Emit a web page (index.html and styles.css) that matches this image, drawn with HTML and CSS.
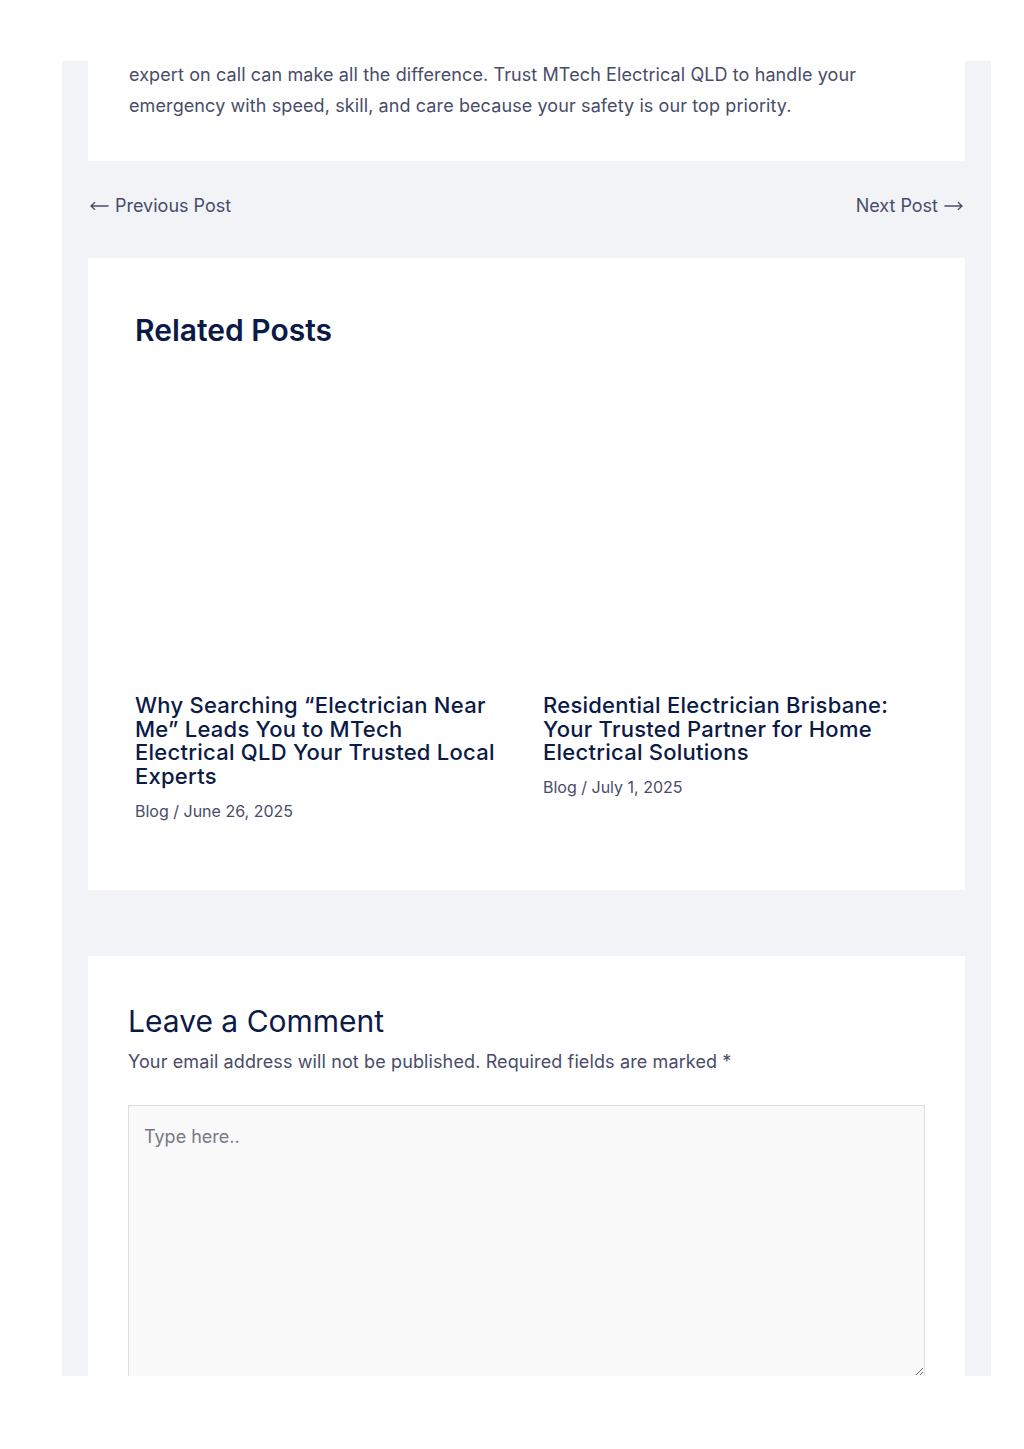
FILE: index.html
```html
<!DOCTYPE html>
<html lang="en">
<head>
    <meta charset="UTF-8">
    <title>Emergency Electrician - MTech Electrical QLD</title>
    <link rel="stylesheet" href="styles.css">
</head>
<body>
    <div class="site">
        <article class="entry">
            <p>expert on call can make all the difference. Trust MTech Electrical QLD to handle your emergency with speed, skill, and care because your safety is our top priority.</p>
        </article>

        <nav class="post-nav">
            <a href="#">
                <svg class="arrow" width="19" height="10" viewBox="0 0 19 10" aria-hidden="true"><path d="M18.5 5H1M5 1.2L1 5l4 3.8"/></svg>
                Previous Post
            </a>
            <a href="#">
                Next Post
                <svg class="arrow" width="19" height="10" viewBox="0 0 19 10" aria-hidden="true"><path d="M0.5 5H18M14 1.2L18 5l-4 3.8"/></svg>
            </a>
        </nav>

        <section class="related">
            <h2>Related Posts</h2>
            <div class="related-grid">
                <div class="related-item">
                    <div class="thumb"></div>
                    <h3><a href="#">Why Searching &ldquo;Electrician Near Me&rdquo; Leads You to MTech Electrical QLD Your Trusted Local Experts</a></h3>
                    <div class="meta">Blog / June 26, 2025</div>
                </div>
                <div class="related-item">
                    <div class="thumb"></div>
                    <h3><a href="#">Residential Electrician Brisbane: Your Trusted Partner for Home Electrical Solutions</a></h3>
                    <div class="meta">Blog / July 1, 2025</div>
                </div>
            </div>
        </section>

        <section class="comments">
            <h3>Leave a Comment</h3>
            <p class="note">Your email address will not be published. Required fields are marked <span>*</span></p>
            <form>
                <textarea placeholder="Type here.."></textarea>
            </form>
        </section>
    </div>
</body>
</html>
```

FILE: styles.css
```css
body {
    margin: 0;
    background: #ffffff;
    font-family: Inter, "Open Sans", sans-serif;
    color: #484c69;
}
a {
    color: inherit;
    text-decoration: none;
}
.site {
    margin: 61px 0 0 62px;
    width: 929px;
    height: 1315px;
    overflow: hidden;
    background: #f2f3f7;
    padding: 0 26px;
    box-sizing: border-box;
}
.entry {
    background: #ffffff;
    padding: 0 40px 40px 41px;
}
.entry p {
    margin: -2px 0 0 0;
    font-size: 18px;
    line-height: 31px;
    letter-spacing: 0.1px;
}
.post-nav {
    display: flex;
    justify-content: space-between;
    align-items: flex-start;
    padding: 33px 2px 0 2px;
    height: 64px;
    font-size: 18px;
    line-height: 24px;
}
.post-nav a {
    display: flex;
    align-items: center;
    gap: 6px;
}
.post-nav .arrow {
    fill: none;
    stroke: #484c69;
    stroke-width: 1.3;
}
.related {
    background: #ffffff;
    padding: 52px 38px 67px 47px;
}
.related h2 {
    margin: 0;
    font-size: 30px;
    font-weight: 600;
    color: #0b1a46;
    line-height: 40px;
}
.related-grid {
    display: grid;
    grid-template-columns: 372px 372px;
    column-gap: 36px;
    margin-top: 20px;
}
.thumb {
    height: 324px;
}
.related-item h3 {
    margin: 0;
    font-size: 22px;
    font-weight: 500;
    line-height: 23.7px;
    letter-spacing: 0.25px;
    color: #0b1a46;
}
.related-item .meta {
    margin-top: 10px;
    font-size: 16px;
    line-height: 24px;
}
.comments {
    background: #ffffff;
    margin-top: 66px;
    padding: 45px 40px 40px 40px;
}
.comments h3 {
    margin: 0;
    font-size: 30px;
    font-weight: 400;
    line-height: 40px;
    color: #0b1a46;
}
.comments .note {
    margin: 8px 0 0 0;
    font-size: 18px;
    line-height: 26px;
    letter-spacing: 0.12px;
}
.comments form {
    margin-top: 30px;
}
.comments textarea {
    display: block;
    width: 100%;
    height: 272px;
    box-sizing: border-box;
    background: #f9f9f9;
    border: 1px solid #dcdde3;
    padding: 20px 15px;
    font-family: inherit;
    font-size: 18px;
    color: #484c69;
}
.comments textarea::placeholder {
    color: #777a86;
}
```
